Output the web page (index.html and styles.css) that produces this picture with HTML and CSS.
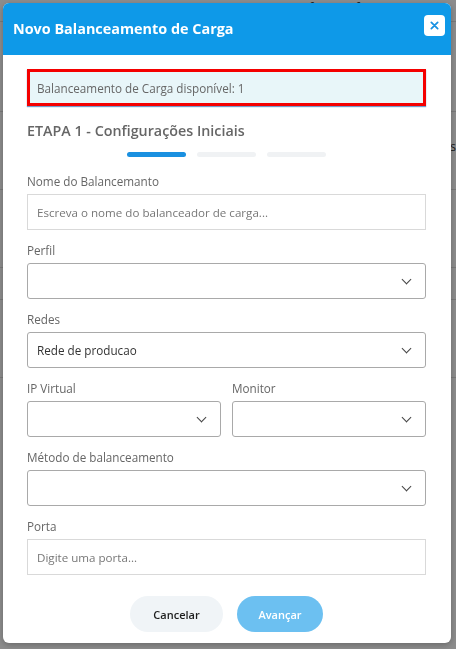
FILE: index.html
```html
<!DOCTYPE html>
<html lang="pt-BR">
<head>
    <meta charset="UTF-8">
    <meta name="viewport" content="width=device-width, initial-scale=1.0">
    <title>Novo Balanceamento de Carga</title>
    <link rel="stylesheet" href="styles.css">
</head>
<body>
    <!-- pagina por tras do modal -->
    <div class="page">
        <div class="page-top">Oferta - Oferta - Univ</div>
        <div class="page-row tall"></div>
        <div class="page-row"><span>s</span></div>
        <div class="page-row"></div>
        <div class="page-row short"></div>
        <div class="page-row"></div>
    </div>

    <div class="overlay">
        <div class="modal">
            <div class="modal-header">
                <h2>Novo Balanceamento de Carga</h2>
                <button class="btn-close" type="button" aria-label="Fechar">
                    <svg width="9" height="9" viewBox="0 0 10 10">
                        <path d="M1.5 1.5 L8.5 8.5 M8.5 1.5 L1.5 8.5" stroke="#1a92e2" stroke-width="2" stroke-linecap="round"/>
                    </svg>
                </button>
            </div>

            <div class="modal-body">
                <div class="alert">Balanceamento de Carga disponível: 1</div>

                <h3 class="step-title">ETAPA 1 - Configurações Iniciais</h3>
                <div class="steps">
                    <span class="step active"></span>
                    <span class="step"></span>
                    <span class="step"></span>
                </div>

                <div class="field">
                    <label>Nome do Balancemanto</label>
                    <input class="input" type="text" placeholder="Escreva o nome do balanceador de carga...">
                </div>

                <div class="field">
                    <label>Perfil</label>
                    <div class="select"><span></span><i class="chevron"></i></div>
                </div>

                <div class="field">
                    <label>Redes</label>
                    <div class="select"><span>Rede de producao</span><i class="chevron"></i></div>
                </div>

                <div class="field-row">
                    <div class="field">
                        <label>IP Virtual</label>
                        <div class="select"><span></span><i class="chevron"></i></div>
                    </div>
                    <div class="field">
                        <label>Monitor</label>
                        <div class="select"><span></span><i class="chevron"></i></div>
                    </div>
                </div>

                <div class="field">
                    <label>Método de balanceamento</label>
                    <div class="select"><span></span><i class="chevron"></i></div>
                </div>

                <div class="field">
                    <label>Porta</label>
                    <input class="input" type="text" placeholder="Digite uma porta...">
                </div>

                <div class="actions">
                    <button class="btn btn-light" type="button">Cancelar</button>
                    <button class="btn btn-primary" type="button">Avançar</button>
                </div>
            </div>
        </div>
    </div>
</body>
</html>
```

FILE: styles.css
```css
* {
    box-sizing: border-box;
}

body {
    margin: 0;
    font-family: "Open Sans", "Liberation Sans", sans-serif;
    background: #fff;
    height: 649px;
    overflow: hidden;
}

.page {
    height: 100%;
}

.page-top {
    height: 22px;
    padding: 1px 0 0 300px;
    font-size: 12px;
    line-height: 14px;
    color: #333;
    border-bottom: 1px solid #ddd;
}

.page-row {
    height: 78px;
    border-bottom: 1px solid #ddd;
    text-align: right;
    font-size: 12px;
    color: #333;
    padding-top: 26px;
}

.page-row.tall {
    height: 90px;
}

.page-row.short {
    height: 32px;
}

.overlay {
    position: fixed;
    inset: 0;
    background: rgba(0, 0, 0, 0.45);
    padding: 3px 0 0 3px;
}

.modal {
    width: 448px;
    height: 640px;
    background: #fff;
    border-radius: 6px;
    overflow: hidden;
    box-shadow: 0 2px 6px rgba(0, 0, 0, 0.25);
}

.modal-header {
    height: 52px;
    background: #0e99e8;
    display: flex;
    align-items: center;
    justify-content: space-between;
    padding: 0 6px 2px 10px;
}

.modal-header h2 {
    margin: 0;
    color: #fff;
    font-size: 14.4px;
    font-weight: 700;
}

.btn-close {
    width: 21px;
    height: 21px;
    margin-top: -6px;
    border: none;
    border-radius: 4px;
    background: #fff;
    padding: 0;
    display: flex;
    align-items: center;
    justify-content: center;
}

.modal-body {
    padding: 14px 25px 0 24px;
}

.alert {
    height: 37px;
    border: 3px solid #f40000;
    background: #e8f6f9;
    color: #666;
    font-size: 11.7px;
    padding: 0 0 0 7px;
    display: flex;
    align-items: center;
    box-shadow: 0 1px 1px rgba(20, 90, 170, 0.6);
}

.step-title {
    margin: 15px 0 0;
    font-size: 14.3px;
    font-weight: 600;
    color: #666;
}

.steps {
    display: flex;
    justify-content: center;
    gap: 11px;
    margin: 12px 0 16px;
}

.step {
    width: 59px;
    height: 5px;
    border-radius: 3px;
    background: #f0f2f4;
}

.step.active {
    background: #1a90e0;
}

.field {
    margin-bottom: 12px;
}

.field label {
    display: block;
    font-size: 11.7px;
    color: #666;
    margin-bottom: 5px;
}

.input {
    display: block;
    width: 100%;
    height: 36px;
    border: 1px solid #d9d9d9;
    border-radius: 0;
    padding: 0 9px;
    font-family: inherit;
    font-size: 11.6px;
    color: #333;
    outline: none;
}

.input::placeholder {
    color: #777;
}

.select {
    height: 36px;
    border: 1px solid #a9a9a9;
    border-radius: 3px;
    display: flex;
    align-items: center;
    justify-content: space-between;
    padding: 0 15px 0 9px;
    font-size: 11.7px;
    color: #333;
}

.chevron {
    width: 7px;
    height: 7px;
    border-right: 1.5px solid #444;
    border-bottom: 1.5px solid #444;
    transform: rotate(45deg);
    margin-top: -4px;
}

.field-row {
    display: grid;
    grid-template-columns: 1fr 1fr;
    gap: 11px;
}

.actions {
    display: flex;
    justify-content: center;
    gap: 14px;
    margin-top: 21px;
}

.btn {
    height: 36px;
    border: none;
    border-radius: 18px;
    font-family: inherit;
    font-size: 11px;
    font-weight: 600;
}

.btn-light {
    width: 93px;
    background: #f0f4f7;
    color: #1e1e1e;
}

.btn-primary {
    width: 86px;
    background: #6cc0f1;
    color: #fff;
}
```
